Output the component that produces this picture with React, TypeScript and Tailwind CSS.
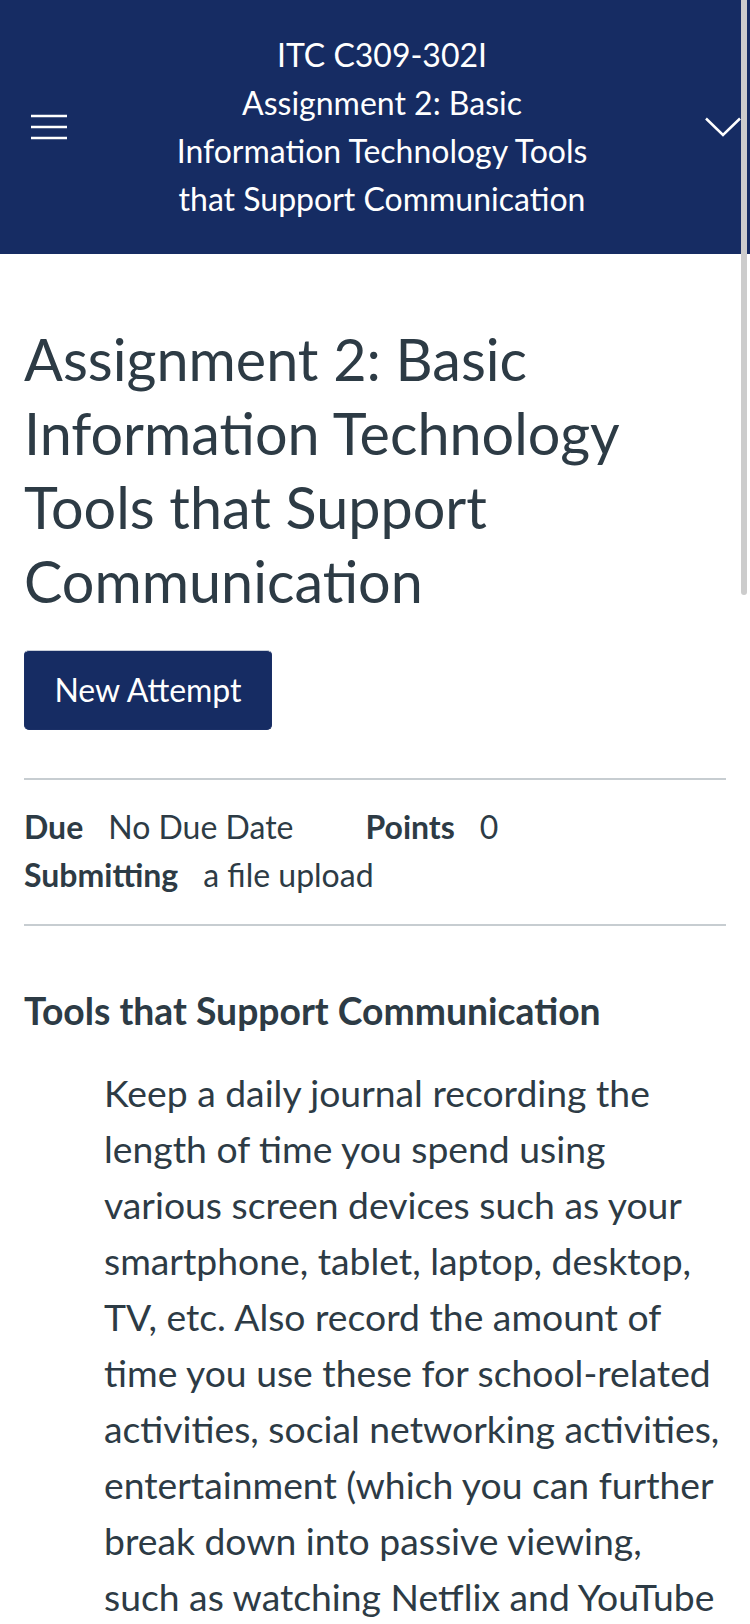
const lato = { fontFamily: '"Lato", "Open Sans", sans-serif' };

function Hamburger() {
  return (
    <svg width="38" height="26" viewBox="0 0 38 26" fill="none" aria-hidden="true">
      <path d="M1 2h36M1 13h36M1 24h36" stroke="#ffffff" strokeWidth="2.5" />
    </svg>
  );
}

function Chevron() {
  return (
    <svg width="36" height="20" viewBox="0 0 36 20" fill="none" aria-hidden="true">
      <path d="M1 1.5 18 18 35 1.5" stroke="#ffffff" strokeWidth="2.5" />
    </svg>
  );
}

function MetaItem({ label, value }: { label: string; value: string }) {
  return (
    <span className="mr-[72px] inline-flex items-baseline gap-[25px] whitespace-nowrap last:mr-0">
      <span className="font-bold">{label}</span>
      <span>{value}</span>
    </span>
  );
}

export default function App() {
  return (
    <div style={lato} className="relative h-[1624px] w-[750px] overflow-hidden bg-white text-[#2d3b45]">
      <header className="grid h-[254px] grid-cols-[100px_1fr_86px] items-center bg-[#162c63] text-white">
        <button type="button" className="flex pl-[30px]">
          <Hamburger />
        </button>
        <div className="mx-auto max-w-[430px] text-center text-[32px] leading-[48px]">
          <div>ITC C309-302I</div>
          <div>Assignment 2: Basic Information Technology Tools that Support Communication</div>
        </div>
        <div className="flex justify-end pr-[9px]">
          <Chevron />
        </div>
      </header>

      <main className="px-6">
        <h1 className="mt-[68px] text-[57.5px] font-normal leading-[74px]">
          Assignment 2: Basic Information Technology Tools that Support Communication
        </h1>

        <button
          type="button"
          className="mt-[32px] h-[80px] w-[248px] rounded-[5px] border border-[#1a2f66] border-t-[#c9cfd9] bg-[#162c63] text-[32px] text-white"
        >
          New Attempt
        </button>

        <section className="mt-[48px] border-y-2 border-[#c7cdd1] pb-[25px] pt-[23px] text-[32px] leading-[48px]">
          <div className="flex">
            <MetaItem label="Due" value="No Due Date" />
            <MetaItem label="Points" value="0" />
          </div>
          <div className="flex">
            <MetaItem label="Submitting" value="a file upload" />
          </div>
        </section>

        <h2 className="mt-[63px] text-[37.3px] font-bold leading-[44px]">
          Tools that Support Communication
        </h2>

        <p className="mt-[32px] pl-[80px] text-[37.3px] leading-[56px]">
          Keep a daily journal recording the length of time you spend using various screen devices
          such as your smartphone, tablet, laptop, desktop, TV, etc. Also record the amount of time
          you use these for school-related activities, social networking activities, entertainment
          (which you can further break down into passive viewing, such as watching Netflix and
          YouTube
        </p>
      </main>

      <div className="pointer-events-none absolute right-[3px] top-0 h-[595px] w-[6px] rounded-b-full bg-[#cccccc]" />
    </div>
  );
}
